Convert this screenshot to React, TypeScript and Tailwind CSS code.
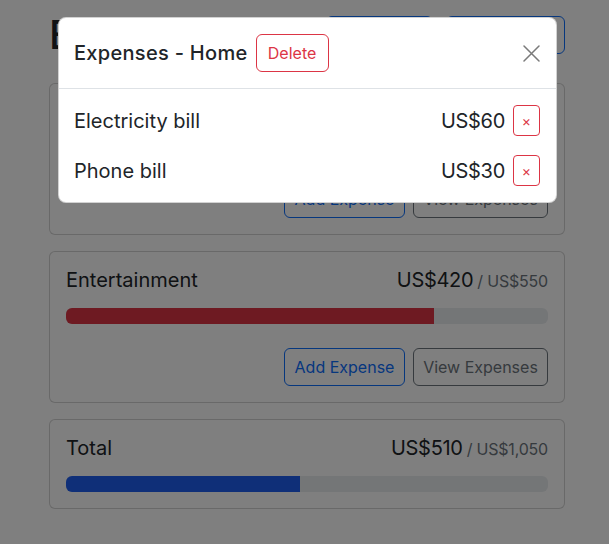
import React from "react";

type Budget = { name: string; amount: number; max: number; buttons: boolean };

const budgets: Budget[] = [
  { name: "Home", amount: 90, max: 500, buttons: true },
  { name: "Entertainment", amount: 420, max: 550, buttons: true },
];

const expenses = [
  { description: "Electricity bill", amount: 60 },
  { description: "Phone bill", amount: 30 },
];

const fmt = (n: number) => "US$" + n.toLocaleString("en-US");

function barColor(ratio: number) {
  if (ratio < 0.5) return "bg-[#1f5ff0]";
  if (ratio < 0.75) return "bg-[#ffc107]";
  return "bg-[#dc3545]";
}

function BudgetCard({ name, amount, max, buttons }: Budget) {
  const ratio = amount / max;
  return (
    <div className="rounded-[6px] border border-black/[0.175] bg-white p-4">
      <div className="flex h-6 items-baseline justify-between leading-[1.2]">
        <div className="text-[20px]">{name}</div>
        <div className="flex items-baseline">
          <span className="text-[20px] tracking-[-0.3px]">{fmt(amount)}</span>
          <span className="ml-1 text-[16px] tracking-[-0.2px] text-[#6c757d]">/ {fmt(max)}</span>
        </div>
      </div>
      <div className="mt-4 h-4 overflow-hidden rounded-[6px] bg-[#e9ecef]">
        <div className={`h-full ${barColor(ratio)}`} style={{ width: `${ratio * 100}%` }} />
      </div>
      {buttons && (
        <div className="mt-6 flex justify-end gap-2">
          <button className="h-[38px] w-[121px] rounded-[6px] border border-[#0d6efd] text-[16px] text-[#0d6efd]">
            Add Expense
          </button>
          <button className="h-[38px] w-[135px] rounded-[6px] border border-[#6c757d] text-[16px] text-[#6c757d]">
            View Expenses
          </button>
        </div>
      )}
    </div>
  );
}

export default function App() {
  const totalAmount = budgets.reduce((s, b) => s + b.amount, 0);
  const totalMax = budgets.reduce((s, b) => s + b.max, 0);

  return (
    <div className="relative h-[544px] overflow-hidden bg-white font-['Inter',sans-serif] text-[#212529]">
      <div className="ml-[49px] w-[516px] pt-[11px]">
        <div className="mb-6 flex h-12 items-center">
          <h1 className="mr-auto text-[40px] font-medium leading-[1.2]">Budgets</h1>
          <button className="h-[38px] w-[107px] rounded-[6px] border border-[#0d6efd] bg-[#0d6efd] text-[16px] text-white">
            Add Budget
          </button>
          <button className="ml-[13px] h-[38px] w-[119px] rounded-[6px] border border-[#0d6efd] text-[16px] text-[#0d6efd]">
            Add Expense
          </button>
        </div>
        <div className="flex flex-col gap-4">
          {budgets.map((b) => (
            <BudgetCard key={b.name} {...b} />
          ))}
          <BudgetCard name="Total" amount={totalAmount} max={totalMax} buttons={false} />
        </div>
      </div>

      <div className="absolute inset-0 bg-black/50">
        <div className="ml-[58px] mt-[17px] w-[499px] rounded-[8px] border border-black/[0.175] bg-white">
          <div className="flex items-center border-b border-[#dee2e6] px-4 py-4 pl-[15px]">
            <div className="text-[20px] font-medium leading-[1.5] tracking-[0.3px]">Expenses - Home</div>
            <button className="ml-2 h-[38px] w-[73px] rounded-[6px] border border-[#dc3545] text-[16px] text-[#dc3545]">
              Delete
            </button>
            <button className="ml-auto flex h-6 w-[18px] items-center justify-center">
              <svg width="17" height="17" viewBox="0 0 17 17" fill="none" stroke="#7a7a7a" strokeWidth="1.5" strokeLinecap="round">
                <path d="M1 1 16 16M16 1 1 16" />
              </svg>
            </button>
          </div>
          <div className="flex flex-col gap-[19px] p-4 pl-[15px]">
            {expenses.map((e) => (
              <div key={e.description} className="flex h-[31px] items-center">
                <div className="mr-auto text-[20px]">{e.description}</div>
                <div className="text-[20px] tracking-[-0.3px]">{fmt(e.amount)}</div>
                <button className="ml-2 flex h-[31px] w-[27px] items-center justify-center rounded-[4px] border border-[#dc3545] text-[14px] text-[#dc3545]">
                  &times;
                </button>
              </div>
            ))}
          </div>
        </div>
      </div>
    </div>
  );
}
